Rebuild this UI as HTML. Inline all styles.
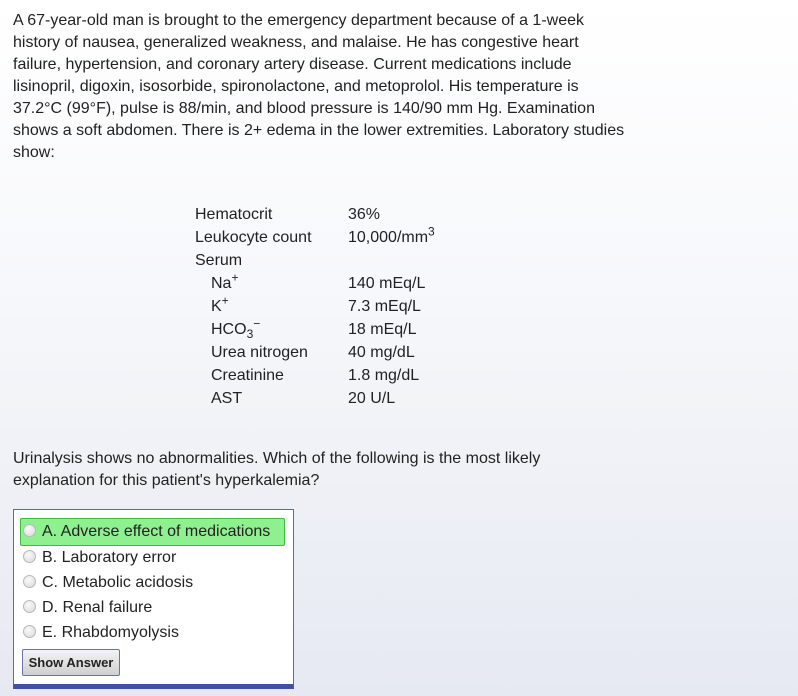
<!DOCTYPE html>
<html><head><style>
html,body{margin:0;padding:0;}
body{width:798px;height:696px;overflow:hidden;background:linear-gradient(#fff 0%,#f7f8fb 40%,#e6e9f2 100%);font-family:"Liberation Sans",Arial,sans-serif;font-size:16px;color:#222;position:relative;}
.p{position:absolute;left:13px;width:780px;line-height:22px;white-space:nowrap;}
.t{position:absolute;left:195px;top:203px;line-height:23px;}
.t div{height:23px;position:relative;}
.t span.v{position:absolute;left:153px;white-space:nowrap;}
.in{padding-left:16px;}
sup{font-size:12px;line-height:0;}
sub{font-size:12px;line-height:0;}
.box{position:absolute;left:13px;top:509px;width:279px;height:174px;border:1px solid #5a6aa8;border-bottom:5px solid #3f51a0;background:#fff;}
.opt{position:absolute;left:6px;height:26px;line-height:26px;white-space:nowrap;}
.opt i{display:inline-block;width:11px;height:11px;border-radius:50%;border:1px solid #b8b8b8;background:radial-gradient(circle at 40% 35%,#fafafa,#d8d8d8);vertical-align:-1px;margin:0 6px 0 3px;}
.sel{background:#8ef08e;border:1px solid #3dbb3d;border-radius:2px;}
.btn{position:absolute;left:8px;top:139px;width:96px;height:25px;border:1px solid #6b74a0;border-radius:2px;background:linear-gradient(#f4f4f4,#cfcfcf);font-weight:bold;font-size:13px;line-height:25px;text-align:center;color:#222;}
</style></head><body>
<div class="p" style="top:10px">A 67-year-old man is brought to the emergency department because of a 1-week<br>history of nausea, generalized weakness, and malaise. He has congestive heart<br>failure, hypertension, and coronary artery disease. Current medications include<br>lisinopril, digoxin, isosorbide, spironolactone, and metoprolol. His temperature is<br>37.2°C (99°F), pulse is 88/min, and blood pressure is 140/90 mm Hg. Examination<br>shows a soft abdomen. There is 2+ edema in the lower extremities. Laboratory studies<br>show:</div>
<div class="t">
<div>Hematocrit<span class="v">36%</span></div>
<div>Leukocyte count<span class="v">10,000/mm<sup>3</sup></span></div>
<div>Serum</div>
<div class="in">Na<sup>+</sup><span class="v">140 mEq/L</span></div>
<div class="in">K<sup>+</sup><span class="v">7.3 mEq/L</span></div>
<div class="in">HCO<sub>3</sub><sup>−</sup><span class="v">18 mEq/L</span></div>
<div class="in">Urea nitrogen<span class="v">40 mg/dL</span></div>
<div class="in">Creatinine<span class="v">1.8 mg/dL</span></div>
<div class="in">AST<span class="v">20 U/L</span></div>
</div>
<div class="p" style="top:448px">Urinalysis shows no abnormalities. Which of the following is the most likely<br>explanation for this patient's hyperkalemia?</div>
<div class="box">
<div class="opt sel" style="top:8px;left:6px;width:263px;height:26px"><i style="margin-left:2px"></i>A. Adverse effect of medications</div>
<div class="opt" style="top:35px"><i></i>B. Laboratory error</div>
<div class="opt" style="top:60px"><i></i>C. Metabolic acidosis</div>
<div class="opt" style="top:85px"><i></i>D. Renal failure</div>
<div class="opt" style="top:110px"><i></i>E. Rhabdomyolysis</div>
<div class="btn">Show Answer</div>
</div>
</body></html>
